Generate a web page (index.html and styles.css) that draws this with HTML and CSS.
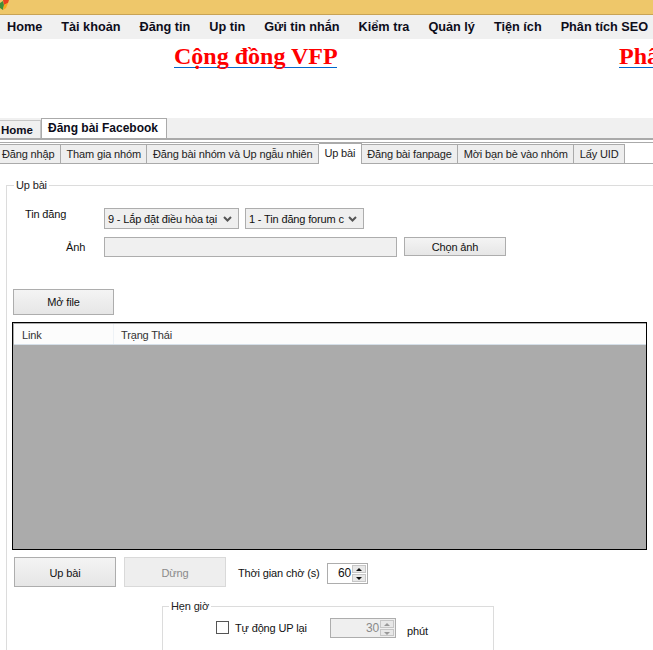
FILE: index.html
```html
<!DOCTYPE html>
<html lang="vi">
<head>
<meta charset="utf-8">
<title>Cộng đồng VFP</title>
<link rel="stylesheet" href="styles.css">
</head>
<body>
<header class="titlebar">
  <svg class="app-icon" width="10" height="10" viewBox="0 0 10 10"><path d="M0 3 3 1 4 5 3 10 0 8z" fill="#3f8f3a"/><path d="M3 0 9 0 8 3 4 5z" fill="#e8401f"/><path d="M4 5 8 3 6 8 3 10z" fill="#f6a81c"/></svg>
</header>
<nav class="menu">
  <span>Home</span><span>Tài khoản</span><span>Đăng tin</span><span>Up tin</span><span>Gửi tin nhắn</span><span>Kiểm tra</span><span>Quản lý</span><span>Tiện ích</span><span>Phân tích SEO</span>
</nav>
<section class="banner">
  <a class="banner-link first">Cộng đồng VFP</a>
  <a class="banner-link second">Phẩ</a>
</section>
<div class="main-tabs">
  <span class="main-tab">Home</span>
  <span class="main-tab active">Đăng bài Facebook</span>
</div>
<div class="sub-tabs">
  <span class="sub-tab">Đăng nhập</span>
  <span class="sub-tab">Tham gia nhóm</span>
  <span class="sub-tab">Đăng bài nhóm và Up ngẫu nhiên</span>
  <span class="sub-tab active">Up bài</span>
  <span class="sub-tab">Đăng bài fanpage</span>
  <span class="sub-tab">Mời bạn bè vào nhóm</span>
  <span class="sub-tab">Lấy UID</span>
</div>
<fieldset class="group main-group">
  <legend>Up bài</legend>
  <div class="row row-news">
    <label class="lbl-news">Tin đăng</label>
    <span class="select s1"><span class="select-text">9 - Lắp đặt điều hòa tại</span><svg class="chev" width="9" height="6" viewBox="0 0 9 6"><path d="M1 1 4.500 4.500 8 1" fill="none" stroke="#555" stroke-width="2"/></svg></span>
    <span class="select s2"><span class="select-text">1 - Tin đăng forum c</span><svg class="chev" width="9" height="6" viewBox="0 0 9 6"><path d="M1 1 4.500 4.500 8 1" fill="none" stroke="#555" stroke-width="2"/></svg></span>
  </div>
  <div class="row row-image">
    <label class="lbl-image">Ảnh</label>
    <span class="textbox"></span>
    <button class="btn btn-choose">Chọn ảnh</button>
  </div>
  <button class="btn btn-open">Mở file</button>
  <div class="grid">
    <div class="grid-head"><span class="col-link">Link</span><span class="col-status">Trạng Thái</span></div>
    <div class="grid-body"></div>
  </div>
  <div class="row row-actions">
    <button class="btn btn-action">Up bài</button>
    <button class="btn btn-action disabled">Dừng</button>
    <label class="lbl-wait">Thời gian chờ (s)</label>
    <span class="spin spin-wait"><span class="spin-val">60</span><span class="spin-btns"><i class="up"></i><i class="down"></i></span></span>
  </div>
  <fieldset class="group timer-group">
    <legend>Hẹn giờ</legend>
    <div class="row row-timer">
      <span class="check"></span>
      <label class="lbl-auto">Tự động UP lại</label>
      <span class="spin spin-auto off"><span class="spin-val">30</span><span class="spin-btns"><i class="up"></i><i class="down"></i></span></span>
      <label class="lbl-min">phút</label>
    </div>
  </fieldset>
</fieldset>
</body>
</html>
```
FILE: styles.css
```css
* { box-sizing: border-box; }
html, body { margin: 0; padding: 0; height: 650px; overflow: hidden; }
body { width: 653px; background: #fff; font: 11px/14px "Liberation Sans", sans-serif; letter-spacing: -0.15px; color: #111; }

.titlebar { height: 15px; background: #eec76a; border-bottom: 1px solid #c8a355; display: flex; }
.app-icon { display: block; }

.menu { height: 24px; background: #f0f0f0; display: flex; align-items: center; padding-left: 7px; gap: 19px; white-space: nowrap; font: bold 12.700px/16px "Liberation Sans", sans-serif; letter-spacing: 0; color: #0d0d1a; }

.banner { height: 79px; display: flex; padding-left: 174px; white-space: nowrap; font: bold 24px/34px "Liberation Serif", serif; letter-spacing: 0; color: #f00; overflow: hidden; }
.banner-link { flex: none; height: 29px; line-height: 34px; border-bottom: 1px solid #0066cc; display: block; }
.banner-link.first { width: 163px; }
.banner-link.second { margin-left: 282px; }

.main-tabs { height: 22px; background: #f0f0f0; border-bottom: 2px solid #aaa; display: flex; align-items: flex-end; font: bold 11.500px/14px "Liberation Sans", sans-serif; letter-spacing: 0; color: #0d0d1a; }
.main-tab { height: 18px; width: 41px; padding: 2px 0 0 1px; border: 1px solid #c6c6c6; border-width: 1px 1px 0 0; }
.main-tab.active { width: 126px; height: 20px; padding: 2px 0 0 6px; background: #fff; border: 1px solid #aaa; border-bottom: 0; font-size: 12px; }

.sub-tabs { height: 22px; margin-top: 2px; border-top: 1px solid #aaa; border-bottom: 1px solid #aaa; display: flex; align-items: flex-end; }
.sub-tab { height: 19px; padding: 2px 5.500px 0 5.500px; background: #eee; border: 1px solid #aaa; border-width: 1px 1px 0 0; color: #222; white-space: nowrap; }
.sub-tab:first-child { padding-left: 2px; }
.sub-tab.active { height: 21px; background: #fff; margin-bottom: -1px; padding-top: 2px; }

.group { margin: 0; padding: 0; border: 1px solid #dcdcdc; min-width: 0; }
.group legend { padding: 0 2px; line-height: 14px; color: #222; }
.main-group { width: 800px; height: 600px; margin: 14px 0 0 6px; padding: 16px 0 0 5px; }
.main-group > legend { margin-left: 2px; }
.row { display: flex; align-items: flex-start; }

.select { height: 21px; flex: none; border: 1px solid #adadad; background: #efefef; display: flex; align-items: center; justify-content: space-between; padding: 0 6px 0 3px; white-space: nowrap; overflow: hidden; }
.chev { flex: none; margin-left: 4px; }
.s1 { width: 135px; }
.s2 { width: 119px; margin-left: 6px; }
.lbl-news { width: 92px; margin-top: -1px; padding-left: 13px; }
.row-news { height: 29px; }

.row-image { height: 52px; }
.lbl-image { width: 92px; padding: 3px 0 0 54px; }
.textbox { width: 293px; height: 20px; background: #f0f0f0; border: 1px solid #adadad; }
.btn { font: inherit; letter-spacing: inherit; color: #111; background: linear-gradient(#f4f4f4, #e6e6e6); border: 1px solid #adadad; padding: 0; }
.btn-choose { width: 102px; height: 19px; margin-left: 7px; }
.btn-open { display: block; width: 101px; height: 26px; margin-left: 1px; }

.grid { width: 635px; height: 228px; margin-top: 7px; border: 1px solid #000; display: flex; flex-direction: column; background: #ababab; padding: 1px 0 0 1px; }
.grid-head { height: 21px; flex: none; background: #fcfcfc; border-bottom: 1px solid #d5dfe8; display: flex; color: #333; line-height: 22px; }
.col-link { width: 100px; padding-left: 8px; border-right: 1px solid #eef2f6; height: 100%; }
.col-status { padding-left: 7px; }
.grid-body { flex: 1; }

.row-actions { margin: 7px 0 0 2px; height: 30px; }
.btn-action { width: 102px; height: 30px; padding-top: 1px; }
.btn-action.disabled { margin-left: 8px; background: #eee; border-color: #d9d9d9; color: #8a8a8a; }
.lbl-wait { margin: 9px 0 0 12px; width: 89px; flex: none; white-space: nowrap; }
.spin { display: flex; height: 21px; border: 1px solid #adadad; background: #fff; flex: none; }
.spin-wait { width: 41px; margin-top: 6px; }
.spin-val { flex: 1; text-align: right; padding: 2px 1px 0 0; font-size: 12px; }
.spin-btns { width: 15px; display: flex; flex-direction: column; gap: 1px; padding: 1px 1px 1px 0; }
.spin-btns i { flex: 1; background: #e8e8e8; border: 1px solid #c6c6c6; position: relative; display: block; }
.spin-btns i::after { content: ""; position: absolute; left: 3px; border-left: 3px solid transparent; border-right: 3px solid transparent; }
.spin-btns .up::after { top: 2px; border-bottom: 3px solid #111; }
.spin-btns .down::after { top: 2px; border-top: 3px solid #111; }
.spin.off { background: #efefef; color: #8a8a8a; }
.spin.off .spin-btns .up::after { border-bottom-color: #999; }
.spin.off .spin-btns .down::after { border-top-color: #999; }

.timer-group { width: 332px; height: 80px; margin: 12px 0 0 150px; }
.timer-group > legend { margin-left: 6px; }
.row-timer { padding: 5px 0 0 53px; }
.check { width: 13px; height: 13px; border: 1px solid #555; background: #fff; margin-top: 3px; }
.lbl-auto { margin-left: 6px; width: 95px; flex: none; padding-top: 3px; }
.spin-auto { width: 66px; height: 20px; }
.lbl-min { margin: 6px 0 0 11px; }
```
